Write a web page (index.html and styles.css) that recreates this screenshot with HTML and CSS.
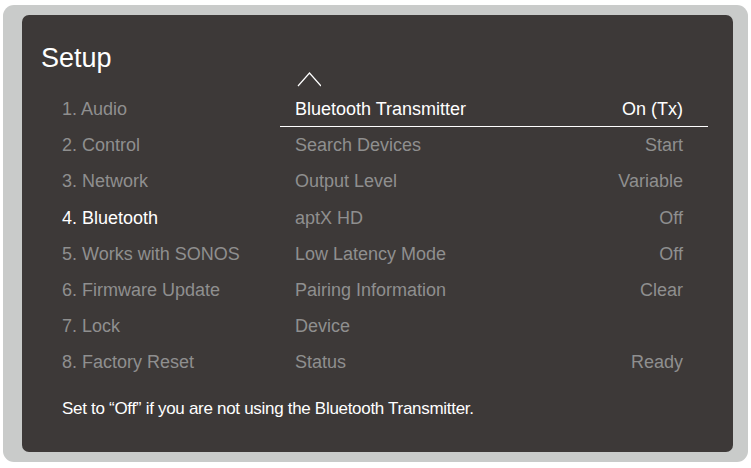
FILE: index.html
```html
<!DOCTYPE html>
<html lang="en">
<head>
    <meta charset="UTF-8">
    <title>Setup - Bluetooth</title>
    <link rel="stylesheet" href="styles.css">
</head>
<body>
    <div class="frame">
        <div class="panel">
            <div class="head">
                <h1 class="title">Setup</h1>
                <div class="caret">
                    <svg width="24" height="15" viewBox="0 0 24 15">
                        <polyline points="1,14 12.5,1 24,14" fill="none" stroke="#fff" stroke-width="1.2"/>
                    </svg>
                </div>
            </div>
            <div class="content">
                <ul class="menu">
                    <li>1. Audio</li>
                    <li>2. Control</li>
                    <li>3. Network</li>
                    <li class="active">4. Bluetooth</li>
                    <li>5. Works with SONOS</li>
                    <li>6. Firmware Update</li>
                    <li>7. Lock</li>
                    <li>8. Factory Reset</li>
                </ul>
                <ul class="list">
                    <li class="selected"><span>Bluetooth Transmitter</span><span>On (Tx)</span></li>
                    <li><span>Search Devices</span><span>Start</span></li>
                    <li><span>Output Level</span><span>Variable</span></li>
                    <li><span>aptX HD</span><span>Off</span></li>
                    <li><span>Low Latency Mode</span><span>Off</span></li>
                    <li><span>Pairing Information</span><span>Clear</span></li>
                    <li><span>Device</span><span></span></li>
                    <li><span>Status</span><span>Ready</span></li>
                </ul>
            </div>
            <p class="hint">Set to “Off” if you are not using the Bluetooth Transmitter.</p>
        </div>
    </div>
</body>
</html>
```

FILE: styles.css
```css
body {
    margin: 0;
    background: #fff;
    font-family: "Liberation Sans", Arial, sans-serif;
}
.frame {
    margin: 5px 3px 0 3px;
    height: 457px;
    box-sizing: border-box;
    padding: 10px 15px 10px 19px;
    background: #c9cbca;
    border-radius: 11px;
}
.panel {
    height: 437px;
    background: #3d3938;
    border-radius: 7px;
    display: flex;
    flex-direction: column;
}
.head {
    height: 76px;
    display: flex;
}
.title {
    width: 239px;
    margin: 0;
    padding: 28px 0 0 19px;
    font-size: 27px;
    line-height: 30px;
    font-weight: normal;
    color: #fff;
}
.caret {
    padding: 57px 0 0 17px;
}
.caret svg {
    display: block;
}
.content {
    display: flex;
}
.menu, .list {
    list-style: none;
    margin: 0;
    padding: 0;
    font-size: 18px;
    color: #8f8f8f;
}
.menu {
    width: 218px;
    padding-left: 40px;
}
.menu li, .list li {
    height: 36.2px;
    line-height: 36px;
}
.menu .active {
    color: #fff;
}
.list {
    width: 428px;
}
.list li {
    display: flex;
    justify-content: space-between;
    padding: 0 25px 0 15px;
    box-sizing: border-box;
}
.list .selected {
    color: #fff;
    border-bottom: 1px solid #fff;
}
.hint {
    margin: 18px 0 0 40px;
    font-size: 17px;
    line-height: 20px;
    letter-spacing: -0.3px;
    color: #fff;
}
```
